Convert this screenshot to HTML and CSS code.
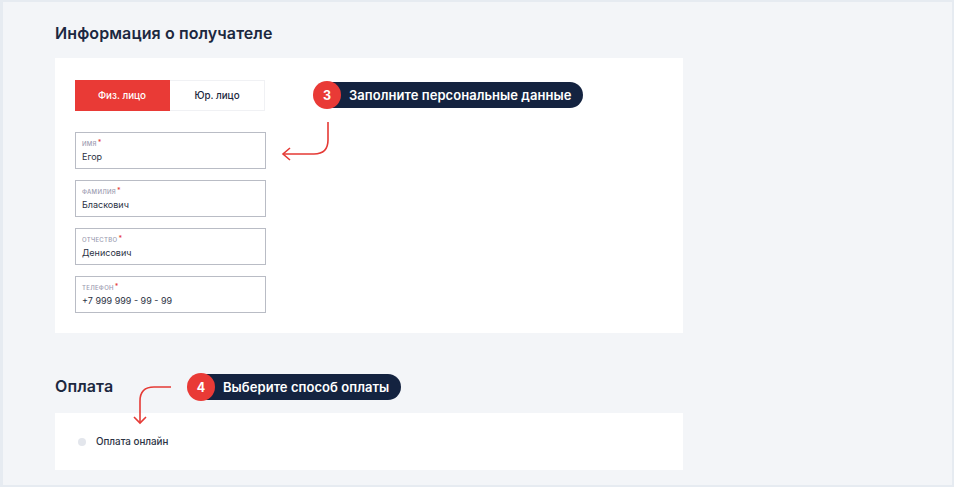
FILE: index.html
```html
<!DOCTYPE html>
<html lang="ru">
<head>
<meta charset="utf-8">
<link rel="stylesheet" href="styles.css">
</head>
<body>
<div class="frame">
  <h2 class="title title-first">Информация о получателе</h2>
  <section class="card card-info">
    <div class="tabs">
      <div class="tab tab-active">Физ. лицо</div>
      <div class="tab">Юр. лицо</div>
    </div>
    <div class="fields">
      <div class="field"><div class="label">ИМЯ<span class="req">*</span></div><div class="value">Егор</div></div>
      <div class="field"><div class="label">ФАМИЛИЯ<span class="req">*</span></div><div class="value">Бласкович</div></div>
      <div class="field"><div class="label">ОТЧЕСТВО<span class="req">*</span></div><div class="value">Денисович</div></div>
      <div class="field"><div class="label">ТЕЛЕФОН<span class="req">*</span></div><div class="value">+7 999 999 - 99 - 99</div></div>
    </div>
  </section>
  <h2 class="title title-pay">Оплата</h2>
  <section class="card card-pay">
    <label class="radio-row"><span class="radio"></span><span class="radio-text">Оплата онлайн</span></label>
  </section>

  <div class="callout callout-3"><span class="num">3</span><span class="pill">Заполните персональные данные</span></div>
  <svg class="arrow arrow-3" width="60" height="50" viewBox="0 0 60 50">
    <path d="M48 2 V20 Q48 34 34 34 H3" fill="none" stroke="#e53a35" stroke-width="1.6"/>
    <path d="M10 28 L3 34 L10 40" fill="none" stroke="#e53a35" stroke-width="1.6"/>
  </svg>
  <div class="callout callout-4"><span class="num">4</span><span class="pill">Выберите способ оплаты</span></div>
  <svg class="arrow arrow-4" width="50" height="45" viewBox="0 0 50 45">
    <path d="M43 2 H26 Q12 2 12 16 V38" fill="none" stroke="#e53a35" stroke-width="1.6"/>
    <path d="M6 32 L12 38 L18 32" fill="none" stroke="#e53a35" stroke-width="1.6"/>
  </svg>
</div>
</body>
</html>
```
FILE: styles.css
```css
* { box-sizing: border-box; }
html, body { margin: 0; padding: 0; }
body { font-family: Inter, "Noto Sans", sans-serif; }

.frame {
  position: relative;
  width: 954px;
  height: 487px;
  background: #f3f5f8;
  border: 2px solid #e6ebf1;
  border-left-width: 3px;
  padding: 0 0 0 52px;
  display: flex;
  flex-direction: column;
  align-items: flex-start;
}

.title {
  margin: 0;
  font-size: 16px;
  font-weight: 600;
  color: #1c2840;
  letter-spacing: 0.1px;
  line-height: 20px;
}
.title-first { margin-top: 21px; }
.title-pay { margin-top: 43px; }

.card {
  background: #fff;
  width: 628px;
}
.card-info {
  margin-top: 15px;
  height: 275px;
  padding: 22px 20px;
}
.card-pay {
  margin-top: 17px;
  height: 57px;
  display: flex;
  align-items: center;
  padding-left: 23px;
}

.tabs {
  display: flex;
  width: 190px;
  height: 31px;
}
.tab {
  flex: 1;
  display: flex;
  align-items: center;
  justify-content: center;
  font-size: 9.8px;
  font-weight: 500;
  color: #1c2840;
  border: 1px solid #f0f1f4;
  border-left: none;
  background: #fff;
}
.tab-active {
  background: #e93a36;
  border-color: #e93a36;
  color: #fff;
}

.fields {
  margin-top: 21px;
  display: flex;
  flex-direction: column;
  gap: 11px;
  width: 191px;
}
.field {
  height: 37px;
  border: 1px solid #b9bcc5;
  padding: 6px 6px 0 6px;
}
.label {
  font-size: 6px;
  font-weight: 500;
  color: #9b9bb0;
  letter-spacing: 0.3px;
  line-height: 8px;
}
.req { color: #e53a35; font-size: 7px; vertical-align: 1px; margin-left: 1px; }
.value {
  font-size: 9px;
  color: #2b3244;
  margin-top: 3px;
  line-height: 12px;
}

.radio-row { display: flex; align-items: center; gap: 10px; }
.radio {
  width: 8px; height: 8px; border-radius: 50%;
  background: #e3e6ec;
}
.radio-text { font-size: 9.8px; font-weight: 500; color: #2b3244; }

.callout {
  position: absolute;
  display: flex;
  align-items: center;
}
.num {
  position: relative;
  z-index: 1;
  width: 28px; height: 28px;
  border-radius: 50%;
  background: #e93a36;
  color: #fff;
  font-size: 12.5px;
  font-weight: 700;
  display: flex; align-items: center; justify-content: center;
}
.pill {
  height: 26px;
  margin-left: -14px;
  padding: 0 12px 0 22px;
  border-radius: 0 13px 13px 0;
  background: #142340;
  color: #fff;
  font-size: 13px;
  font-weight: 600;
  letter-spacing: 0.05px;
  display: flex; align-items: center;
  white-space: nowrap;
}
.callout-3 { left: 310px; top: 79px; }
.callout-4 { left: 184px; top: 371px; }

.arrow { position: absolute; }
.arrow-3 { left: 277px; top: 118px; }
.arrow-4 { left: 125px; top: 383px; }
```
